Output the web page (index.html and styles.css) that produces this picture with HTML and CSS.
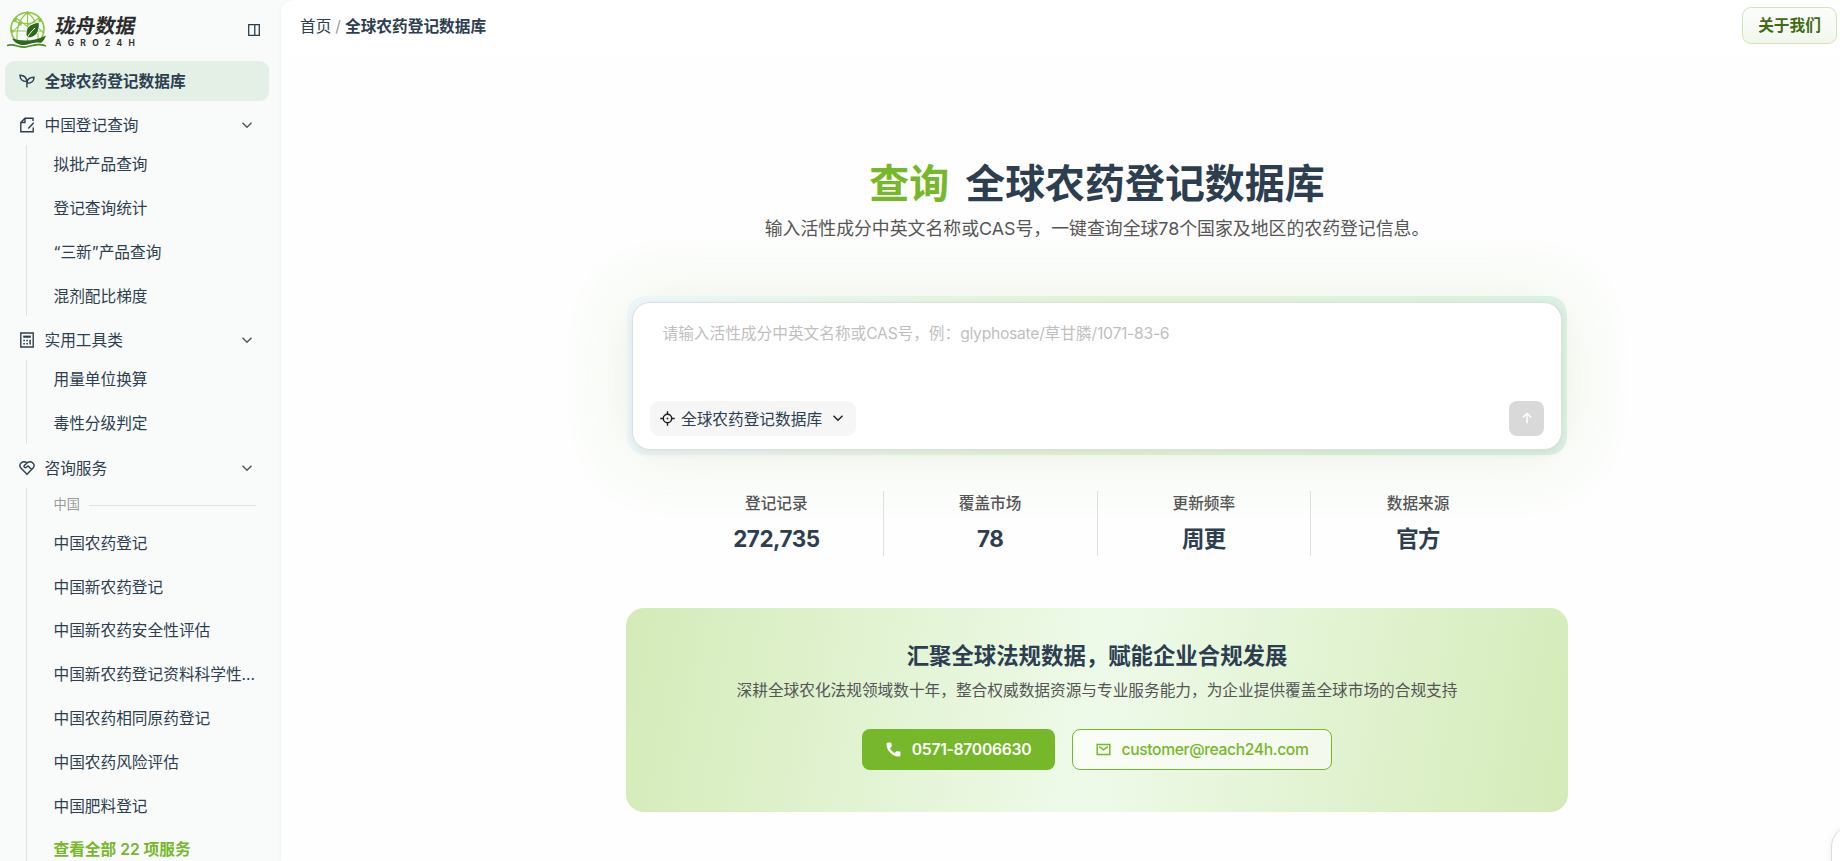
FILE: index.html
```html
<!DOCTYPE html>
<html lang="zh-CN">
<head>
<meta charset="utf-8">
<title>全球农药登记数据库</title>
<link rel="stylesheet" href="styles.css">
</head>
<body>
<svg class="defs" width="0" height="0">
  <symbol id="chevron" viewBox="0 0 12 12"><path d="M1.5 3.8 6 8.3l4.500-4.500" fill="none" stroke="currentColor" stroke-width="1.400"/></symbol>
</svg>
<div class="app">
  <aside class="sidebar">
    <div class="brand">
      <svg class="brand-mark" viewBox="0 0 40 38" fill="none">
        <circle cx="20.500" cy="18" r="16.500" stroke="#8cc63f" stroke-width="1.600"/>
        <path d="M20.500 1.500v31M6 10Q20 15 35 10M4 20h33M20.500 1.500Q9 10 10 30M20.500 1.500Q32 10 31 30M9 7l11 8L32 7M5 22l9-10M36 22 27 12" stroke="#8cc63f" stroke-width="1.100"/>
        <g fill="#8cc63f"><circle cx="20.500" cy="2" r="1.800"/><circle cx="8" cy="9" r="1.800"/><circle cx="33" cy="9" r="1.800"/><circle cx="13" cy="13" r="1.800"/><circle cx="5" cy="20" r="1.600"/></g>
        <path d="M32 11c-9 2-13 5-13 11 0 2 .5 4 1.500 5 8 0 13-6 11.500-16Z" fill="#2d6a1e" stroke="#f9fbfa" stroke-width="1"/>
        <path d="M19 29c2-5 5-8 9-12" stroke="#f9fbfa" stroke-width="1"/>
        <path d="M5 27.500c10 3 23 3 34-3-2 6-6 8.500-10 9.500H14c-4-1-7-3-9-6.500Z" fill="#2d6a1e"/>
        <path d="M0 34.500c6-3 12 2 18 1s12-5 21-.5" stroke="#f9fbfa" stroke-width="3"/>
        <path d="M0 34.500c7-2.500 12 2.500 19 1.500 7-1.500 12-4 20-1" stroke="#4b8a2a" stroke-width="1.600"/>
      </svg>
      <div class="brand-words">
        <span class="brand-cn">珑舟数据</span>
        <span class="brand-en"><i>A</i><i>G</i><i>R</i><i>O</i><i>2</i><i>4</i><i>H</i></span>
      </div>
      <svg class="toggle" viewBox="0 0 12 12" fill="none" stroke="#2c3e50" stroke-width="1.300"><path d="M.7.700h10.600v10.600H.7zM6.800.7v10.600"/></svg>
    </div>
    <nav class="nav">
      <a class="row active">
        <svg class="icon" viewBox="0 0 16 16" fill="none" stroke="currentColor" stroke-width="1.400"><path d="M7.900 14.600V9.500C7.900 4.500 5.200 2.300 1 2.200 1 6 3 8.500 7.800 8.500M8 9.800c.2-3.600 2.600-5.500 7-5.500 0 4-2.400 6-7 6"/></svg>
        <span>全球农药登记数据库</span>
      </a>
      <a class="row">
        <svg class="icon" viewBox="0 0 16 16" fill="none" stroke="currentColor" stroke-width="1.400"><path d="M14 4V1.200H6L1.800 5.500v9.200h12.400V10.500M6 1.200v4.300H1.800M9.300 11.500l5.400-5.800"/></svg>
        <span>中国登记查询</span><svg class="caret"><use href="#chevron"/></svg>
      </a>
      <div class="sub">
        <a>拟批产品查询</a><a>登记查询统计</a><a>“三新”产品查询</a><a>混剂配比梯度</a>
      </div>
      <a class="row">
        <svg class="icon" viewBox="0 0 16 16" fill="none" stroke="currentColor" stroke-width="1.400"><path d="M1.800 1h12.400v14H1.800z"/><path d="M4.200 4.700h7.600" stroke-width="2.200"/><path d="M4.300 8.500h1.600m1.400 0h1.600m1.400 0h1.600M4.300 11.700h1.600m1.400 0h1.600m2.200-3.900v4.800" stroke-width="1.500"/></svg>
        <span>实用工具类</span><svg class="caret"><use href="#chevron"/></svg>
      </a>
      <div class="sub">
        <a>用量单位换算</a><a>毒性分级判定</a>
      </div>
      <a class="row">
        <svg class="icon" viewBox="0 0 16 16" fill="none" stroke="currentColor" stroke-width="1.400"><path d="M8 14.200 1.900 8.100C-1 4.500 3.500-.3 8 2.900c4.500-3.200 9 1.600 6.100 5.200L8 14.200ZM8 2.900 5.100 5.700c-.5 1.600 1.200 2.500 2.300 1.600l1.700-1.400 3.500 3.500"/></svg>
        <span>咨询服务</span><svg class="caret"><use href="#chevron"/></svg>
      </a>
      <div class="sub services">
        <div class="divider">中国</div>
        <a>中国农药登记</a><a>中国新农药登记</a><a>中国新农药安全性评估</a><a>中国新农药登记资料科学性...</a><a>中国农药相同原药登记</a><a>中国农药风险评估</a><a>中国肥料登记</a><a class="more">查看全部 22 项服务</a>
      </div>
    </nav>
  </aside>
  <main class="main">
    <header class="topbar">
      <div class="crumbs"><span>首页</span><span class="slash">/</span><b>全球农药登记数据库</b></div>
      <button class="about">关于我们</button>
    </header>
    <div class="content">
      <h1><em>查询</em><span>全球农药登记数据库</span></h1>
      <p class="lead">输入活性成分中英文名称或CAS号，一键查询全球78个国家及地区的农药登记信息。</p>
      <div class="search-frame">
        <div class="search">
          <div class="placeholder">请输入活性成分中英文名称或<span class="latin">CAS</span>号，例：<span class="latin">glyphosate/</span>草甘膦<span class="latin">/1071-83-6</span></div>
          <div class="search-actions">
            <button class="scope">
              <svg width="15" height="15" viewBox="0 0 15 15" fill="none" stroke="#1f1f1f" stroke-width="1.400"><circle cx="7.500" cy="7.500" r="4.200"/><path d="M7.500.3v3M7.500 11.700v3M.3 7.500h3M11.700 7.500h3"/><circle cx="7.500" cy="7.500" r=".9" fill="#1f1f1f" stroke="none"/></svg>
              <span>全球农药登记数据库</span>
              <svg class="scope-caret"><use href="#chevron"/></svg>
            </button>
            <button class="send"><svg width="12" height="12" viewBox="0 0 12 12" fill="none" stroke="#fff" stroke-width="1.500"><path d="M6 11.300V1.500M1.800 5.500 6 1.300l4.200 4.200"/></svg></button>
          </div>
        </div>
      </div>
      <div class="stats">
        <div><span>登记记录</span><strong>272,735</strong></div>
        <div><span>覆盖市场</span><strong>78</strong></div>
        <div><span>更新频率</span><strong>周更</strong></div>
        <div><span>数据来源</span><strong>官方</strong></div>
      </div>
      <section class="cta">
        <h2>汇聚全球法规数据，赋能企业合规发展</h2>
        <p>深耕全球农化法规领域数十年，整合权威数据资源与专业服务能力，为企业提供覆盖全球市场的合规支持</p>
        <div class="cta-buttons">
          <a class="phone"><svg width="15" height="15" viewBox="0 0 15 15" fill="#fff"><path d="M3.300.400 4.500.500c.5 0 .8.300.9.800l.4 2.600c.1.300 0 .6-.3.900L4 6.300c1 2 2.600 3.600 4.700 4.700l1.500-1.500c.2-.2.600-.3.900-.3l2.600.4c.5.100.8.400.8.900v2.200c0 1.100-.6 1.800-1.700 1.800C6.300 14.300.600 8.700.500 2.200.500 1.100 1.100.400 2.200.400Z"/></svg>0571-87006630</a>
          <a class="mail"><svg width="15" height="15" viewBox="0 0 15 15" fill="none" stroke="#76b82a" stroke-width="1.500"><path d="M1.200 2.600h12.600v9.800H1.200zM3.200 4.700l4.300 3.200 4.300-3.200"/></svg>customer@reach24h.com</a>
        </div>
      </section>
    </div>
  </main>
</div>
<div class="float-tab"></div>
</body>
</html>
```
FILE: styles.css
```css
* { box-sizing: border-box; }
body {
  margin: 0;
  height: 861px;
  overflow: hidden;
  position: relative;
  background: #f9fbfa;
  color: #2c3e50;
  font-family: Inter, "Noto Sans CJK SC", sans-serif;
  font-size: 15.68px;
  line-height: 1.5;
}
.defs { display: block; position: absolute; }
button { font: inherit; padding: 0; }
.app { display: flex; height: 861px; overflow: hidden; }

.sidebar { width: 281px; flex: none; height: 861px; overflow: hidden; }
.brand { height: 61px; display: flex; align-items: flex-start; padding: 11px 0 0 7px; }
.brand-mark { width: 40px; height: 38px; }
.brand-words { margin-left: 8px; width: 80px; }
.brand-cn {
  display: block;
  height: 27px;
  line-height: 31px;
  padding-left: 1px;
  font-size: 20px;
  font-weight: 700;
  color: #2b2b2b;
  white-space: nowrap;
  transform: skewX(-10deg);
}
.brand-en {
  display: flex;
  justify-content: space-between;
  font-size: 8.500px;
  line-height: 8px;
  padding-top: 1px;
  font-weight: 700;
  color: #333;
}
.brand-en i { font-style: normal; }
.toggle { width: 12px; height: 12px; margin: 13px 0 0 113px; }

.nav { display: flex; flex-direction: column; gap: 4.500px; padding: 0 12px 0 5px; }
.row {
  height: 39.500px;
  display: flex;
  align-items: center;
  padding: 0 16px 0 14px;
  border-radius: 9px;
  flex: none;
}
.row span { padding-top: 2px; }
.row.active { background: #e4efe6; font-weight: 700; }
.icon { width: 16px; height: 16px; margin-right: 9.500px; }
.caret { width: 12px; height: 12px; margin-left: auto; color: #555; }
.sub {
  margin: -4.500px 3px 0 21px;
  border-left: 1px solid #dfe3e2;
  padding-left: 26.500px;
  display: flex;
  flex-direction: column;
  gap: 4.500px;
}
.sub a {
  flex: none;
  height: 39.500px;
  line-height: 40px;
  white-space: nowrap;
}
.services { gap: 4.300px; }
.sub .more { color: #76b82a; font-weight: 600; }
.divider {
  height: 32px;
  display: flex;
  align-items: center;
  gap: 9px;
  padding-top: 2px;
  margin-right: 10px;
  font-size: 13.200px;
  color: #999;
}
.divider::after { content: ""; flex: 1; height: 1px; background: #dfe3e2; margin-top: 2px; }

.main {
  flex: 1;
  background: #fdfefd;
  border-radius: 14px 0 0 0;
  box-shadow: 0 0 4px rgba(0, 0, 0, .05);
  overflow: hidden;
}
.topbar {
  height: 57px;
  background: #fff;
  display: flex;
  justify-content: space-between;
  align-items: flex-start;
  padding: 7px 3px 0 19px;
}
.crumbs { display: flex; height: 40px; align-items: center; }
.slash { color: #999; padding: 0 4px; }
.crumbs b { font-weight: 700; }
.about {
  width: 95px;
  height: 37px;
  border: 1px solid #cfe6b8;
  border-radius: 9px;
  background: linear-gradient(#fcfdfb, #f1f7ed);
  color: #3f6b12;
  font-weight: 700;
  padding-top: 1px;
}

.content { width: 942px; margin: 0 0 0 345px; padding-top: 96px; }
h1 {
  margin: 0;
  height: 60px;
  padding-top: 1px;
  display: flex;
  justify-content: center;
  align-items: center;
  gap: 16px;
  font-size: 39.950px;
  font-weight: 700;
}
h1 em { font-style: normal; color: #76b82a; }
.lead { margin: 0; height: 83px; line-height: 32px; text-align: center; font-size: 17.880px; color: #555; white-space: nowrap; }
.search-frame {
  margin: 0 1px;
  height: 159px;
  padding: 5.500px 5px;
  border-radius: 18px;
  background: linear-gradient(100deg, #ecf6fa 0%, #e2f2d4 50%, #daf1e2 100%);
  box-shadow: 0 2px 66px rgba(118, 170, 70, .14);
}
.search {
  height: 148px;
  background: #fff;
  border: 1px solid #dcdfdc;
  border-radius: 18px;
  box-shadow: 0 3px 8px rgba(0, 0, 0, .07);
  padding: 19px 17px 13px;
  display: flex;
  flex-direction: column;
  justify-content: space-between;
}
.placeholder { padding-left: 12.500px; color: #bfbfbf; white-space: nowrap; }
.latin { letter-spacing: -.27px; }
.search-actions { display: flex; justify-content: space-between; }
.scope {
  width: 206px;
  height: 35px;
  border: 0;
  border-radius: 9px;
  background: #f6f6f6;
  display: flex;
  align-items: center;
  padding: 0 12px 0 10px;
  color: #2c3e50;
}
.scope span { margin-left: 6px; padding-top: 3px; white-space: nowrap; }
.scope-caret { width: 12px; height: 12px; margin-left: auto; color: #1f1f1f; }
.send {
  width: 35px;
  height: 35px;
  border: 0;
  border-radius: 8px;
  background: #d9d9d9;
  display: flex;
  align-items: center;
  justify-content: center;
}

.stats { display: grid; grid-template-columns: repeat(4, 1fr); width: 855px; height: 64px; margin: 36px auto 53px; position: relative; left: .5px; }
.stats div { display: flex; flex-direction: column; align-items: center; border-right: 1px solid #e0e0e0; padding-top: 1px; }
.stats div:last-child { border: 0; }
.stats span { line-height: 24px; font-weight: 500; color: #555; }
.stats strong { margin-top: 6px; line-height: 34px; font-size: 22.400px; font-weight: 700; letter-spacing: -.45px; }

.cta {
  height: 204px;
  border-radius: 18px;
  background: linear-gradient(100deg, #d4ebb8 0%, #eefae9 50%, #d4ebb8 100%);
  padding-top: 30px;
  text-align: center;
}
.cta h2 { margin: 0; font-size: 22.400px; line-height: 36px; font-weight: 700; }
.cta p { margin: 4px 0 0; line-height: 25px; color: #555; white-space: nowrap; }
.cta-buttons { display: flex; justify-content: center; gap: 17px; margin-top: 26px; }
.cta-buttons a {
  height: 41px;
  border-radius: 8px;
  display: flex;
  align-items: center;
  justify-content: center;
  gap: 11px;
  font-weight: 500;
}
.phone { width: 193px; background: #76b82a; color: #fff; letter-spacing: -.27px; }
.cta-buttons .phone { font-weight: 600; }
.mail { width: 260px; border: 1px solid #76b82a; background: rgba(255, 255, 255, .6); color: #76b82a; letter-spacing: -.38px; }

.float-tab {
  position: absolute;
  left: 1831px;
  top: 825px;
  width: 46px;
  height: 60px;
  border: 1px solid #ddd;
  border-radius: 22px;
  background: #fff;
  box-shadow: 0 2px 10px rgba(0, 0, 0, .06);
}
```
